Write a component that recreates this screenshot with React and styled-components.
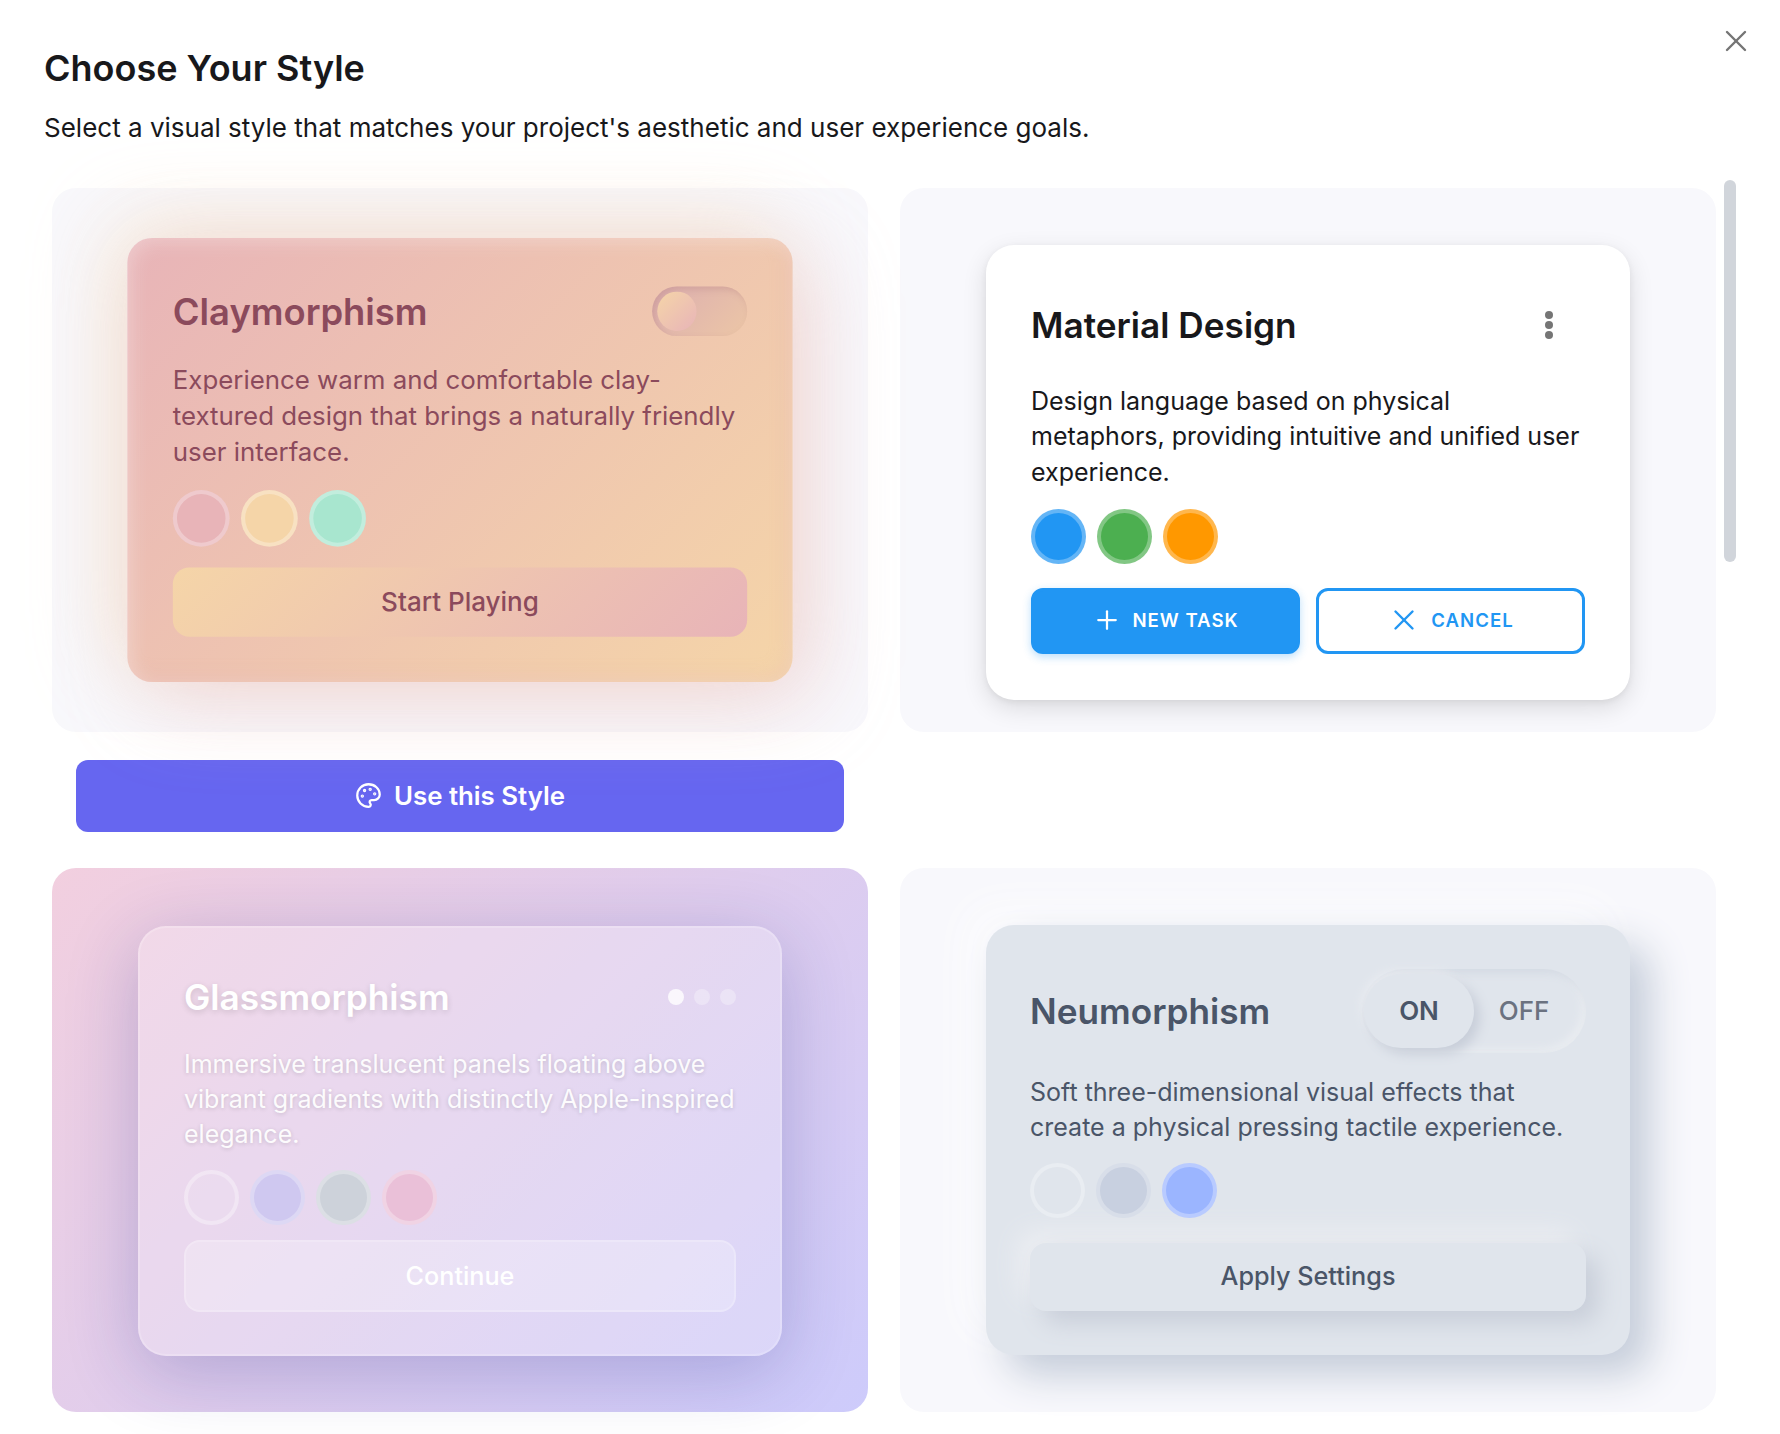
import React from 'react';
import styled, { createGlobalStyle } from 'styled-components';
import { Palette, Plus, X } from 'lucide-react';

const GlobalStyle = createGlobalStyle`
  * { box-sizing: border-box; }
  html, body { margin: 0; padding: 0; background: #fff; overflow: hidden; }
  body { font-family: Inter, "Liberation Sans", sans-serif; }
`;

const Modal = styled.div`
  position: relative;
  width: 1780px;
  height: 1434px;
  overflow: hidden;
  background: #fff;
  padding: 48px 0 0 44px;
`;

const CloseButton = styled.button`
  position: absolute;
  top: 23px;
  right: 26px;
  width: 36px;
  height: 36px;
  padding: 0;
  border: 0;
  background: none;
  color: #757575;
`;

const Title = styled.h1`
  margin: 0;
  font-size: 36px;
  line-height: 40px;
  font-weight: 600;
  color: #18181b;
`;

const Subtitle = styled.p`
  margin: 22px 0 0;
  font-size: 26px;
  line-height: 36px;
  color: #18181b;
`;

const Scrollbar = styled.div`
  position: absolute;
  top: 180px;
  left: 1724px;
  width: 12px;
  height: 382px;
  border-radius: 6px;
  background: #d1d5db;
`;

const Grid = styled.div`
  display: grid;
  grid-template-columns: 816px 816px;
  column-gap: 32px;
  row-gap: 36px;
  margin: 42px 0 0 8px;
  align-items: start;
`;

const Column = styled.div`
  display: flex;
  flex-direction: column;
`;

const Panel = styled.div`
  height: 544px;
  border-radius: 24px;
  background: ${p => p.$bg || '#f8f8fc'};
  display: flex;
  align-items: center;
  justify-content: center;
`;

const UseButton = styled.button`
  margin: 28px 24px 0;
  height: 72px;
  padding-bottom: 2px;
  border: 0;
  border-radius: 12px;
  background: #6666f0;
  color: #fff;
  font-family: inherit;
  font-size: 25.8px;
  font-weight: 600;
  display: flex;
  align-items: center;
  justify-content: center;
  gap: 12px;
`;

const Card = styled.div`
  width: 644px;
  border-radius: 28px;
  padding: 44px;
`;

const ClayCard = styled(Card)`
  transform: scale(1.033);
  border-radius: 24px;
  background: linear-gradient(135deg, #e8b4b8 0%, #f5d5a8 100%);
  box-shadow:
    20px 20px 80px rgba(232, 180, 184, 0.42),
    -14px -14px 80px rgba(245, 213, 168, 0.42),
    inset 5px 5px 18px rgba(255, 255, 255, 0.28),
    inset -5px -5px 18px rgba(232, 180, 184, 0.25);
`;

const MaterialCard = styled(Card)`
  margin-top: 25px;
  padding: 46px 45px;
  background: #fff;
  box-shadow: 0 8px 24px rgba(0, 0, 0, 0.12), 0 2px 6px rgba(0, 0, 0, 0.06);
`;

const GlassCard = styled(Card)`
  margin-top: 2px;
  padding-bottom: 42px;
  border: 2px solid rgba(255, 255, 255, 0.18);
  background: rgba(255, 255, 255, 0.22);
  box-shadow: 0 16px 72px rgba(31, 38, 135, 0.24);
`;

const NeuCard = styled(Card)`
  background: #e0e5ec;
  box-shadow: 20px 20px 40px #c4ccd9, -20px -20px 40px #fbfbfd;
`;

const CardHeader = styled.div`
  display: flex;
  align-items: center;
  justify-content: space-between;
  height: ${p => p.$h}px;
  margin-bottom: ${p => p.$mb}px;
`;

const CardTitle = styled.h2`
  margin: 0;
  font-size: 35.2px;
  font-weight: 600;
  color: ${p => p.$color};
  text-shadow: ${p => p.$glow ? '0 2px 6px rgba(0,0,0,0.14)' : 'none'};
`;

const Description = styled.p`
  margin: 0;
  font-size: 25px;
  line-height: 35.2px;
  color: ${p => p.$color};
  text-shadow: ${p => p.$glow ? '0 1px 4px rgba(0,0,0,0.16)' : 'none'};
`;

const Swatches = styled.div`
  display: flex;
  gap: 11px;
  margin: ${p => p.$mt}px 0 ${p => p.$mb}px;
`;

const Swatch = styled.span`
  width: 55px;
  height: 55px;
  border-radius: 50%;
  background: ${p => p.$color};
  border: 4px solid rgba(255, 255, 255, 0.3);
`;

const ClayToggle = styled.div`
  width: 92px;
  height: 48px;
  margin-top: 1px;
  border-radius: 24px;
  padding: 5px;
  background: linear-gradient(135deg, #dcaeb0, #ecc6a6);
  box-shadow: inset 3px 3px 6px rgba(180, 130, 130, 0.35);
`;

const ClayThumb = styled.div`
  width: 38px;
  height: 38px;
  border-radius: 50%;
  background: linear-gradient(135deg, #f5d5a8, #e8b4b8);
`;

const ClayButton = styled.button`
  display: block;
  width: 100%;
  height: 67px;
  padding-bottom: 2px;
  border: 0;
  border-radius: 16px;
  background: linear-gradient(135deg, #f5d5a8, #e8b4b8);
  color: #8b4a5c;
  font-family: inherit;
  font-size: 25.2px;
  font-weight: 500;
`;

const GlassDots = styled.div`
  display: flex;
  gap: 10px;
`;

const GlassDot = styled.span`
  width: 16px;
  height: 16px;
  border-radius: 50%;
  background: rgba(255, 255, 255, ${p => p.$on ? 0.8 : 0.3});
`;

const GlassButton = styled.button`
  display: block;
  width: 100%;
  height: 72px;
  padding-bottom: 2px;
  border: 2px solid rgba(255, 255, 255, 0.2);
  border-radius: 16px;
  background: rgba(255, 255, 255, 0.25);
  color: #fff;
  font-family: inherit;
  font-size: 25.2px;
  font-weight: 500;
`;

const MoreButton = styled.svg`
  width: 36px;
  height: 36px;
  margin-right: 18px;
  fill: #757575;
`;

const MaterialActions = styled.div`
  display: grid;
  grid-template-columns: 1fr 1fr;
  gap: 16px;
`;

const MaterialButton = styled.button`
  height: 66px;
  padding-bottom: 2px;
  border-radius: 12px;
  border: 3px solid #2196f3;
  background: ${p => p.$filled ? '#2196f3' : '#fff'};
  color: ${p => p.$filled ? '#fff' : '#2196f3'};
  box-shadow: ${p => p.$filled ? '0 3px 8px rgba(33,150,243,0.3)' : 'none'};
  font-family: inherit;
  font-size: 18.6px;
  font-weight: 600;
  letter-spacing: 1px;
  display: flex;
  align-items: center;
  justify-content: center;
  gap: 10px;
`;

const NeuToggle = styled.div`
  width: 224px;
  height: 84px;
  border-radius: 42px;
  display: flex;
  align-items: center;
  padding-left: 2px;
  box-shadow: inset 4px 4px 8px #d4dae3, inset -4px -4px 8px #eaedf1;
  font-size: 26px;
`;

const NeuOn = styled.div`
  width: 110px;
  height: 74px;
  border-radius: 37px;
  background: #e0e5ec;
  color: #4a5568;
  font-weight: 600;
  display: flex;
  align-items: center;
  justify-content: center;
  box-shadow: 6px 6px 12px #c8ced9, -4px -4px 8px #e8ebf0;
`;

const NeuOff = styled.div`
  flex: 1;
  padding-right: 12px;
  color: #6b7280;
  font-weight: 500;
  text-align: center;
`;

const NeuButton = styled.button`
  display: block;
  width: 100%;
  height: 68px;
  padding-bottom: 3px;
  border: 0;
  border-radius: 16px;
  background: #e0e5ec;
  color: #4a5568;
  font-family: inherit;
  font-size: 25.2px;
  font-weight: 500;
  box-shadow: 12px 12px 24px #c8ced9, -12px -12px 24px #eceef2;
`;

export default function App() {
  return (
    <Modal>
      <GlobalStyle />
      <CloseButton><X size={36} strokeWidth={1.6} /></CloseButton>
      <Title>Choose Your Style</Title>
      <Subtitle>Select a visual style that matches your project's aesthetic and user experience goals.</Subtitle>
      <Scrollbar />

      <Grid>
        <Column>
          <Panel>
            <ClayCard>
              <CardHeader $h={53} $mb={23}>
                <CardTitle $color="#8b4a5c">Claymorphism</CardTitle>
                <ClayToggle><ClayThumb /></ClayToggle>
              </CardHeader>
              <Description $color="#8b4a5c">
                Experience warm and comfortable clay-textured design that brings a naturally friendly user interface.
              </Description>
              <Swatches $mt={18} $mb={20}>
                <Swatch $color="#e8b4b8" />
                <Swatch $color="#f5d5a8" />
                <Swatch $color="#a8e6cf" />
              </Swatches>
              <ClayButton>Start Playing</ClayButton>
            </ClayCard>
          </Panel>
          <UseButton><Palette size={27} strokeWidth={2} />Use this Style</UseButton>
        </Column>

        <Panel>
          <MaterialCard>
            <CardHeader $h={68} $mb={25}>
              <CardTitle $color="#18181b">Material Design</CardTitle>
              <MoreButton viewBox="0 0 36 36">
                <circle cx="18" cy="8" r="4" />
                <circle cx="18" cy="18" r="4" />
                <circle cx="18" cy="28" r="4" />
              </MoreButton>
            </CardHeader>
            <Description $color="#18181b">
              Design language based on physical metaphors, providing intuitive and unified user experience.
            </Description>
            <Swatches $mt={19} $mb={24}>
              <Swatch $color="#2196f3" />
              <Swatch $color="#4caf50" />
              <Swatch $color="#ff9800" />
            </Swatches>
            <MaterialActions>
              <MaterialButton $filled><Plus size={30} strokeWidth={1.8} />NEW TASK</MaterialButton>
              <MaterialButton><X size={34} strokeWidth={1.7} />CANCEL</MaterialButton>
            </MaterialActions>
          </MaterialCard>
        </Panel>

        <Panel $bg="linear-gradient(135deg, #f2cfdf 0%, #cdcbfb 100%)">
          <GlassCard>
            <CardHeader $h={50} $mb={25}>
              <CardTitle $color="#fff" $glow>Glassmorphism</CardTitle>
              <GlassDots>
                <GlassDot $on />
                <GlassDot />
                <GlassDot />
              </GlassDots>
            </CardHeader>
            <Description $color="rgba(255,255,255,0.95)" $glow>
              Immersive translucent panels floating above vibrant gradients with distinctly Apple-inspired elegance.
            </Description>
            <Swatches $mt={18} $mb={15}>
              <Swatch $color="rgba(255,255,255,0.08)" />
              <Swatch $color="#cfc8f0" />
              <Swatch $color="#cdd2da" />
              <Swatch $color="#eac0d8" />
            </Swatches>
            <GlassButton>Continue</GlassButton>
          </GlassCard>
        </Panel>

        <Panel>
          <NeuCard>
            <CardHeader $h={84} $mb={22}>
              <CardTitle $color="#4a5568">Neumorphism</CardTitle>
              <NeuToggle>
                <NeuOn>ON</NeuOn>
                <NeuOff>OFF</NeuOff>
              </NeuToggle>
            </CardHeader>
            <Description $color="#4a5568">
              Soft three-dimensional visual effects that create a physical pressing tactile experience.
            </Description>
            <Swatches $mt={18} $mb={25}>
              <Swatch $color="#e0e5ec" />
              <Swatch $color="#c8d0e0" />
              <Swatch $color="#9bb5ff" />
            </Swatches>
            <NeuButton>Apply Settings</NeuButton>
          </NeuCard>
        </Panel>
      </Grid>
    </Modal>
  );
}
